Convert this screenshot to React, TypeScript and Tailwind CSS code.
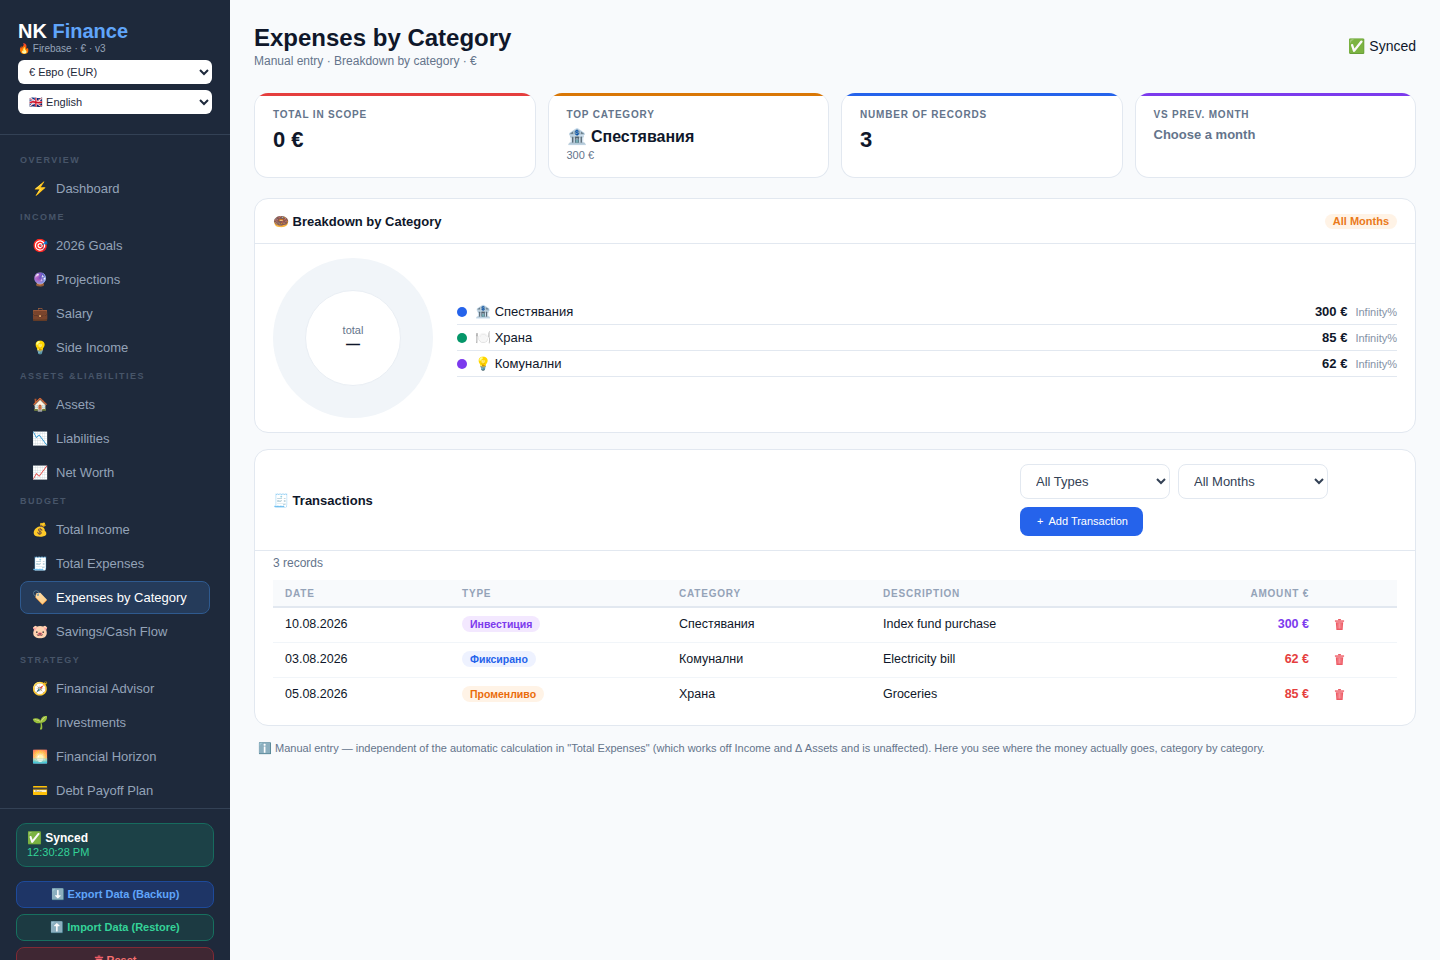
import React from "react";

const navSections = [
  { label: "Overview", items: [["⚡", "Dashboard"]] },
  {
    label: "Income",
    items: [
      ["🎯", "2026 Goals"],
      ["🔮", "Projections"],
      ["💼", "Salary"],
      ["💡", "Side Income"],
    ],
  },
  {
    label: "Assets &Liabilities",
    items: [
      ["🏠", "Assets"],
      ["📉", "Liabilities"],
      ["📈", "Net Worth"],
    ],
  },
  {
    label: "Budget",
    items: [
      ["💰", "Total Income"],
      ["🧾", "Total Expenses"],
      ["🏷️", "Expenses by Category"],
      ["🐷", "Savings/Cash Flow"],
    ],
  },
  {
    label: "Strategy",
    items: [
      ["🧭", "Financial Advisor"],
      ["🌱", "Investments"],
      ["🌅", "Financial Horizon"],
      ["💳", "Debt Payoff Plan"],
    ],
  },
];

const legend = [
  { color: "bg-[#2563eb]", icon: "🏦", name: "Спестявания", amount: "300 €" },
  { color: "bg-[#059669]", icon: "🍽️", name: "Храна", amount: "85 €" },
  { color: "bg-[#7c3aed]", icon: "💡", name: "Комунални", amount: "62 €" },
];

const rows = [
  {
    date: "10.08.2026",
    type: "Инвестиция",
    badge: "bg-[#f3e8ff] text-[#7c3aed]",
    category: "Спестявания",
    description: "Index fund purchase",
    amount: "300 €",
    amountColor: "text-[#7c3aed]",
  },
  {
    date: "03.08.2026",
    type: "Фиксирано",
    badge: "bg-[#eef2ff] text-[#2563eb]",
    category: "Комунални",
    description: "Electricity bill",
    amount: "62 €",
    amountColor: "text-[#e53e3e]",
  },
  {
    date: "05.08.2026",
    type: "Променливо",
    badge: "bg-[#fff3e6] text-[#ea6c0a]",
    category: "Храна",
    description: "Groceries",
    amount: "85 €",
    amountColor: "text-[#e53e3e]",
  },
];

const TrashIcon: React.FC<{ className?: string }> = ({ className }) => (
  <svg viewBox="0 0 12 13" className={className} aria-hidden="true">
    <rect x="4.5" y="0.5" width="3" height="1.5" fill="#ee5a64" />
    <rect x="1" y="2" width="10" height="1.5" fill="#ee5a64" />
    <path d="M2 4h8l-.6 8.5H2.6z" fill="#ee5a64" />
    <path d="M4.5 5v6M6 5v6M7.5 5v6" stroke="#fbb4b8" strokeWidth="0.7" />
  </svg>
);

const Sidebar: React.FC = () => (
  <aside className="flex h-[960px] w-[230px] shrink-0 flex-col overflow-hidden bg-[#1e293b]">
    <div className="h-[135px] shrink-0 border-b border-[#334155] px-[18px] pt-[20px]">
      <div className="text-[20px] leading-[22px] font-bold text-white">
        NK <span className="text-[#60a5fa]">Finance</span>
      </div>
      <div className="mt-[1px] text-[10px] leading-[12px] text-[#94a3b8]">🔥 Firebase · € · v3</div>
      <select className="mt-[5px] block h-[24px] w-[194px] rounded-[6px] bg-white pl-[7px] text-[11px] text-[#1e293b]">
        <option>€ Евро (EUR)</option>
      </select>
      <select className="mt-[6px] block h-[24px] w-[194px] rounded-[6px] bg-white pl-[7px] text-[11px] text-[#1e293b]">
        <option>🇬🇧 English</option>
      </select>
    </div>

    <nav className="h-[673px] shrink-0 px-[20px] pt-[19px]">
      {navSections.map((section) => (
        <div key={section.label}>
          <div className="h-[12px] text-[9px] leading-[12px] font-bold tracking-[1.5px] text-[#475569] uppercase">
            {section.label}
          </div>
          <div className="flex flex-col gap-[1px] pt-[6px] pb-[6px]">
            {section.items.map(([icon, name]) => {
              const active = name === "Expenses by Category";
              return (
                <div
                  key={name}
                  className={
                    active
                      ? "flex h-[33px] items-center gap-[9px] rounded-[8px] border border-[#2f5a8f] bg-[#253b5a] pl-[11px] text-[13px] text-white"
                      : "flex h-[33px] items-center gap-[9px] rounded-[8px] border border-transparent pl-[11px] text-[13px] text-[#94a3b8]"
                  }
                >
                  <span className="w-[15px] text-center text-[13px]">{icon}</span>
                  <span>{name}</span>
                </div>
              );
            })}
          </div>
        </div>
      ))}
    </nav>

    <div className="flex-1 border-t border-[#334155] px-[16px] pt-[14px]">
      <div className="h-[44px] rounded-[10px] border border-[#176b5e] bg-[#1c4147] px-[10px] pt-[7px]">
        <div className="text-[12px] leading-[14px] font-bold text-white">✅ Synced</div>
        <div className="mt-[1px] text-[11px] leading-[13px] text-[#34d399]">12:30:28 PM</div>
      </div>
      <button className="mt-[14px] block h-[27px] w-full rounded-[8px] border border-[#1e4a9a] bg-[#1e3566] text-center text-[11px] font-bold text-[#60a5fa]">
        ⬇️ Export Data (Backup)
      </button>
      <button className="mt-[6px] block h-[27px] w-full rounded-[8px] border border-[#17705f] bg-[#1c3a42] text-center text-[11px] font-bold text-[#34d399]">
        ⬆️ Import Data (Restore)
      </button>
      <button className="mt-[6px] flex h-[27px] w-full items-center justify-center gap-[3px] rounded-[8px] border border-[#7f2a35] bg-[#3f2733] text-[11px] font-bold text-[#f87171]">
        <TrashIcon className="h-[11px] w-[10px]" />
        <span>Reset</span>
      </button>
    </div>
  </aside>
);

const StatCard: React.FC<{ accent: string; label: string; children: React.ReactNode }> = ({
  accent,
  label,
  children,
}) => (
  <div className="h-[85px] overflow-hidden rounded-[14px] border border-t-0 border-[#e2e8f0] bg-white">
    <div className={`h-[3px] ${accent}`} />
    <div className="px-[18px] pt-[12px]">
      <div className="text-[10px] leading-[14px] font-bold tracking-[0.8px] text-[#64748b] uppercase">{label}</div>
      {children}
    </div>
  </div>
);

const App: React.FC = () => {
  return (
    <div className="flex h-[960px] overflow-hidden bg-[#f8fafc] font-['Liberation_Sans',sans-serif] text-[#0f172a]">
      <Sidebar />
      <main className="flex-1 px-[24px] pt-[24px]">
        <header className="flex h-[45px] items-center justify-between">
          <div>
            <h1 className="text-[24px] leading-[28px] font-bold">Expenses by Category</h1>
            <p className="mt-[1px] text-[12px] leading-[16px] text-[#64748b]">
              Manual entry · Breakdown by category · €
            </p>
          </div>
          <div className="text-[14px] text-[#0f172a]">✅ Synced</div>
        </header>

        <section className="mt-[24px] grid grid-cols-4 gap-[12px]">
          <StatCard accent="bg-[#e53e3e]" label="Total in scope">
            <div className="mt-[5px] text-[22px] leading-[26px] font-bold">0 €</div>
          </StatCard>
          <StatCard accent="bg-[#d97706]" label="Top category">
            <div className="mt-[5px] text-[16px] leading-[20px] font-bold">🏦 Спестявания</div>
            <div className="mt-[1px] text-[11px] leading-[14px] text-[#64748b]">300 €</div>
          </StatCard>
          <StatCard accent="bg-[#2563eb]" label="Number of records">
            <div className="mt-[5px] text-[22px] leading-[26px] font-bold">3</div>
          </StatCard>
          <StatCard accent="bg-[#7c3aed]" label="VS prev. month">
            <div className="mt-[5px] text-[13px] leading-[16px] font-bold text-[#64748b]">Choose a month</div>
          </StatCard>
        </section>

        <section className="mt-[20px] h-[235px] rounded-[14px] border border-[#e2e8f0] bg-white">
          <div className="flex h-[45px] items-center justify-between border-b border-[#e2e8f0] px-[18px]">
            <h2 className="pt-[2px] text-[13px] font-bold">🍩 Breakdown by Category</h2>
            <span className="rounded-full bg-[#fff3e6] px-[8px] text-[11px] leading-[15px] font-bold text-[#ea7a1a]">
              All Months
            </span>
          </div>
          <div className="flex items-center gap-[24px] px-[18px] pt-[14px]">
            <div className="flex h-[160px] w-[160px] shrink-0 items-center justify-center rounded-full bg-[#f1f5f9]">
              <div className="flex h-[96px] w-[96px] flex-col items-center justify-center rounded-full border border-[#e9eef4] bg-white pb-[2px]">
                <div className="text-[11px] leading-[14px] text-[#64748b]">total</div>
                <div className="text-[14px] leading-[14px] font-bold">—</div>
              </div>
            </div>
            <div className="flex-1">
              {legend.map((item) => (
                <div key={item.name} className="flex h-[26px] items-center border-b border-[#e2e8f0] text-[13px]">
                  <span className={`h-[10px] w-[10px] rounded-full ${item.color}`} />
                  <span className="ml-[8px] flex-1">
                    {item.icon} {item.name}
                  </span>
                  <span className="font-bold">{item.amount}</span>
                  <span className="ml-[8px] pt-[1px] text-[11px] text-[#8592a6]">Infinity%</span>
                </div>
              ))}
            </div>
          </div>
        </section>

        <section className="mt-[16px] h-[277px] rounded-[14px] border border-[#e2e8f0] bg-white">
          <div className="flex h-[101px] items-center justify-between border-b border-[#e2e8f0] pr-[87px] pl-[18px]">
            <h2 className="pt-[2px] text-[13px] font-bold">🧾 Transactions</h2>
            <div className="flex w-[308px] flex-wrap gap-[8px]">
              <select className="h-[35px] w-[150px] rounded-[8px] border border-[#e2e8f0] bg-white pl-[11px] text-[13px] text-[#334155]">
                <option>All Types</option>
              </select>
              <select className="h-[35px] w-[150px] rounded-[8px] border border-[#e2e8f0] bg-white pl-[11px] text-[13px] text-[#334155]">
                <option>All Months</option>
              </select>
              <button className="flex h-[29px] w-[123px] items-center justify-center gap-[5px] rounded-[8px] bg-[#2563eb] pl-[2px] text-[11px] text-white">
                <span>+</span>
                <span>Add Transaction</span>
              </button>
            </div>
          </div>
          <div className="px-[18px]">
            <div className="pt-[4px] text-[12px] leading-[16px] text-[#64748b]">3 records</div>
            <table className="mt-[9px] w-full table-fixed border-collapse text-[12.5px]">
              <colgroup>
                <col className="w-[177px]" />
                <col className="w-[217px]" />
                <col className="w-[204px]" />
                <col className="w-[450px]" />
                <col className="w-[76px]" />
              </colgroup>
              <thead>
                <tr className="h-[27px] border-b-2 border-[#e2e8f0] bg-[#f8fafc] text-[10px] font-bold tracking-[0.8px] text-[#94a3b8] uppercase">
                  <th className="px-[12px] text-left">Date</th>
                  <th className="px-[12px] text-left">Type</th>
                  <th className="px-[12px] text-left">Category</th>
                  <th className="px-[12px] text-right">
                    <div className="flex justify-between">
                      <span>Description</span>
                      <span>Amount €</span>
                    </div>
                  </th>
                  <th />
                </tr>
              </thead>
              <tbody>
                {rows.map((row, i) => (
                  <tr key={row.date} className={i < 2 ? "h-[35px] border-b border-[#f1f5f9]" : "h-[35px]"}>
                    <td className="px-[12px]">{row.date}</td>
                    <td className="px-[12px]">
                      <span className={`inline-block rounded-full px-[8px] text-[10.5px] leading-[16px] font-bold ${row.badge}`}>
                        {row.type}
                      </span>
                    </td>
                    <td className="px-[12px]">{row.category}</td>
                    <td className="px-[12px]">
                      <div className="flex justify-between">
                        <span>{row.description}</span>
                        <span className={`font-bold ${row.amountColor}`}>{row.amount}</span>
                      </div>
                    </td>
                    <td className="px-[12px]">
                      <TrashIcon className="ml-[1px] h-[13px] w-[11px]" />
                    </td>
                  </tr>
                ))}
              </tbody>
            </table>
          </div>
        </section>

        <p className="mt-[15px] pl-[4px] text-[11px] leading-[14px] text-[#64748b]">
          ℹ️ Manual entry — independent of the automatic calculation in "Total Expenses" (which works off Income and Δ
          Assets and is unaffected). Here you see where the money actually goes, category by category.
        </p>
      </main>
    </div>
  );
};

export default App;
